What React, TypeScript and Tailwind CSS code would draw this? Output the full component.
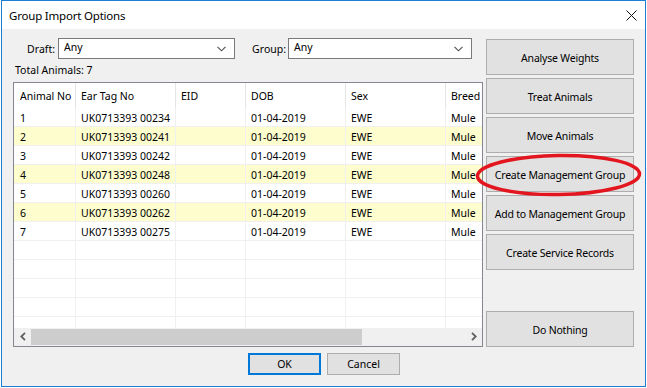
import React from "react";

const rows = [
  ["1", "UK0713393 00234"],
  ["2", "UK0713393 00241"],
  ["3", "UK0713393 00242"],
  ["4", "UK0713393 00248"],
  ["5", "UK0713393 00260"],
  ["6", "UK0713393 00262"],
  ["7", "UK0713393 00275"],
];

const cols = [
  { name: "Animal No", w: "w-[62px]", pl: "pl-[6px]" },
  { name: "Ear Tag No", w: "w-[100px]", pl: "pl-[5px]" },
  { name: "EID", w: "w-[70px]", pl: "pl-[5px]" },
  { name: "DOB", w: "w-[100px]", pl: "pl-[5px]" },
  { name: "Sex", w: "w-[100px]", pl: "pl-[5px]" },
  { name: "Breed", w: "w-[100px]", pl: "pl-[5px]" },
];

function Chevron() {
  return (
    <svg width="9" height="6" viewBox="0 0 9 6" className="shrink-0">
      <polyline points="0.5,0.8 4.5,4.8 8.5,0.8" fill="none" stroke="#505050" strokeWidth="1.1" />
    </svg>
  );
}

function Combo({ w }: { w: string }) {
  return (
    <div className={`${w} h-[21px] bg-white border border-[#7a7a7a] flex items-center pl-[5px] pr-[8px]`}>
      <span className="flex-1 leading-none -mt-[3px]">Any</span>
      <Chevron />
    </div>
  );
}

function SideButton({ label, extra = "" }: { label: string; extra?: string }) {
  return (
    <div
      className={`w-[148px] h-[36px] bg-[#e1e1e1] border border-[#adadad] flex items-center justify-center pt-[3px] tracking-[-0.2px] ${extra}`}
    >
      {label}
    </div>
  );
}

export default function App() {
  const emptyRows = [0, 1, 2, 3, 4];
  return (
    <div className="w-[647px] h-[388px] bg-white relative font-['Noto_Sans','Open_Sans',sans-serif] text-[10.5px] text-black overflow-hidden">
      <div className="ml-[1px] w-[645px] h-[387px] border border-[#1a7fd4] flex flex-col">
        {/* title bar */}
        <div className="h-[28px] bg-white flex items-center shrink-0">
          <span className="ml-[7px] text-[11.5px] tracking-[-0.2px] pt-[1px]">Group Import Options</span>
          <div className="flex-1" />
          <svg width="11" height="11" viewBox="0 0 11 11" className="mr-[8px] mt-[1px]">
            <path d="M0.5 0.5 L10.5 10.5 M10.5 0.5 L0.5 10.5" stroke="#111" strokeWidth="1" />
          </svg>
        </div>

        {/* body */}
        <div className="flex-1 bg-[#f0f0f0] flex flex-col pt-[9px]">
          <div className="flex pl-[11px]">
            {/* left column */}
            <div className="w-[470px] flex flex-col">
              <div className="flex items-center h-[21px]">
                <div className="w-[45px] text-right pr-[3px] pt-[2px]">Draft:</div>
                <Combo w="w-[177px]" />
                <div className="w-[53px] text-right pr-[2px] pt-[2px]">Group:</div>
                <Combo w="w-[184px]" />
              </div>
              <div className="h-[24px] flex items-center pl-[2px] -mt-[1px] pt-[1px]">Total Animals: 7</div>

              {/* table */}
              <div className="h-[265px] border border-[#828790] bg-white flex flex-col overflow-hidden">
                <div className="flex h-[25px] shrink-0">
                  {cols.map((c) => (
                    <div
                      key={c.name}
                      className={`${c.w} shrink-0 h-full border-r border-[#e5e5e5] ${c.pl} flex items-center pt-[2px] whitespace-nowrap`}
                    >
                      {c.name}
                    </div>
                  ))}
                </div>
                <div className="h-[220px] overflow-hidden shrink-0">
                  {rows.map(([n, tag], i) => (
                    <div key={n} className={`flex h-[19px] ${i % 2 === 1 ? "bg-[#fdfdcd]" : "bg-white"}`}>
                      {[n, tag, "", "01-04-2019", "EWE", "Mule"].map((v, j) => (
                        <div
                          key={j}
                          className={`${cols[j].w} shrink-0 h-full border-r border-b border-[#f0f0f0] ${cols[j].pl} flex items-center pt-[3px] whitespace-nowrap`}
                        >
                          {v}
                        </div>
                      ))}
                    </div>
                  ))}
                  {emptyRows.map((r) => (
                    <div key={r} className="flex h-[19px] bg-white">
                      {cols.map((c) => (
                        <div key={c.name} className={`${c.w} shrink-0 h-full border-r border-b border-[#f0f0f0]`} />
                      ))}
                    </div>
                  ))}
                </div>
                {/* horizontal scrollbar */}
                <div className="h-[18px] shrink-0 bg-[#f0f0f0] flex items-start">
                  <div className="w-[17px] h-[17px] flex items-center justify-center">
                    <svg width="6" height="9" viewBox="0 0 6 9">
                      <polyline points="5,0.8 1.3,4.5 5,8.2" fill="none" stroke="#606060" strokeWidth="1.8" />
                    </svg>
                  </div>
                  <div className="w-[331px] h-[16px] mt-[1px] bg-[#cdcdcd]" />
                  <div className="flex-1" />
                  <div className="w-[17px] h-[17px] flex items-center justify-center">
                    <svg width="6" height="9" viewBox="0 0 6 9">
                      <polyline points="1,0.8 4.7,4.5 1,8.2" fill="none" stroke="#606060" strokeWidth="1.8" />
                    </svg>
                  </div>
                </div>
              </div>
            </div>

            {/* right column */}
            <div className="ml-[3px] mt-[1px] flex flex-col gap-[3px]">
              <SideButton label="Analyse Weights" />
              <SideButton label="Treat Animals" />
              <SideButton label="Move Animals" />
              <SideButton label="Create Management Group" />
              <SideButton label="Add to Management Group" />
              <SideButton label="Create Service Records" />
              <SideButton label="Do Nothing" extra="mt-[38px]" />
            </div>
          </div>

          {/* footer */}
          <div className="flex justify-center gap-[6px] mt-[6px] pl-[1px]">
            <div className="w-[73px] h-[22px] bg-[#e1e1e1] border-2 border-[#0078d7] flex items-center justify-center pt-[1px]">
              OK
            </div>
            <div className="w-[73px] h-[22px] bg-[#e1e1e1] border border-[#adadad] flex items-center justify-center pt-[1px]">
              Cancel
            </div>
          </div>
        </div>
      </div>

      {/* red annotation ellipse */}
      <svg className="absolute left-0 top-0 pointer-events-none" width="647" height="388">
        <ellipse
          cx="558.5"
          cy="175"
          rx="81"
          ry="19.5"
          fill="none"
          stroke="#e3161f"
          strokeWidth="3.5"
          transform="rotate(-0.8 558.5 175)"
        />
      </svg>
    </div>
  );
}
